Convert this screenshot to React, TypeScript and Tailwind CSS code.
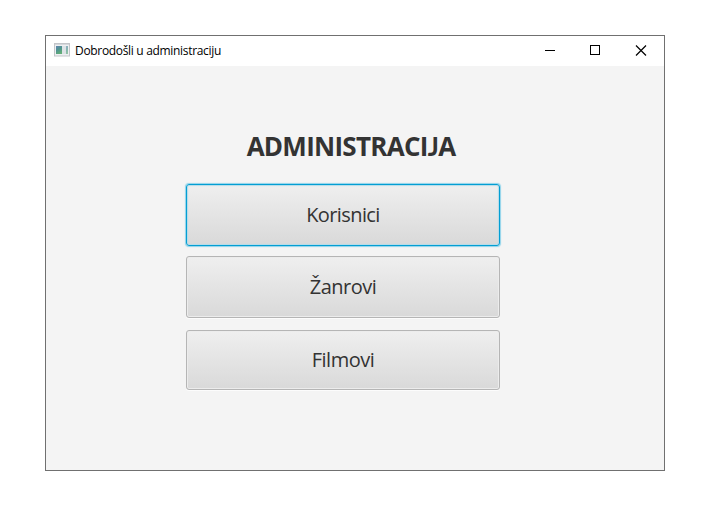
import React from "react";

type MenuButtonProps = {
  label: string;
  className: string;
  textClassName: string;
};

function MenuButton({ label, className, textClassName }: MenuButtonProps) {
  return (
    <button
      type="button"
      className={`flex w-[314px] items-center justify-center rounded-[3px] border bg-linear-to-b from-[#efefef] to-[#d9d9d9] text-[20px] leading-[26px] text-[#333333] ${className}`}
    >
      <span className={textClassName}>{label}</span>
    </button>
  );
}

function AppIcon() {
  return (
    <svg width="16" height="14" viewBox="0 0 16 14" className="mb-0.5 block shrink-0">
      <defs>
        <linearGradient id="pane" x1="0" y1="0" x2="0.5" y2="1">
          <stop offset="0" stopColor="#6284b0" />
          <stop offset="0.5" stopColor="#4f9490" />
          <stop offset="1" stopColor="#62ad78" />
        </linearGradient>
      </defs>
      <rect x="0.5" y="0.5" width="15" height="12.5" fill="#eef0f2" stroke="#c3c5c9" />
      <path d="M1 1.5h14" stroke="#d5d8dc" />
      <rect x="2" y="3" width="6" height="8" fill="url(#pane)" />
      <rect x="8" y="3" width="4" height="8" fill="#dde3e6" />
      <rect x="12" y="3" width="2" height="8" fill="url(#pane)" opacity="0.65" />
    </svg>
  );
}

function TitleBar() {
  return (
    <header className="flex h-[30px] items-center bg-white pl-2">
      <AppIcon />
      <span className="ml-[5px] text-[12px] leading-4 tracking-[-0.32px] whitespace-nowrap text-black">
        Dobrodošli u administraciju
      </span>
      <div className="ml-auto flex h-full items-center pr-[17px]">
        <svg width="102" height="12" viewBox="0 0 102 12" fill="none" stroke="#000" className="block">
          <path d="M0 5.5h10" />
          <rect x="45.5" y="0.5" width="9" height="9" />
          <path d="M91 0.5l10 10M101 0.5l-10 10" strokeWidth="1.2" />
        </svg>
      </div>
    </header>
  );
}

export default function App() {
  return (
    <div className="h-[525px] w-[705px] bg-white px-[45px] pt-[35px] font-['Open_Sans','Noto_Sans',sans-serif]">
      <div className="h-[436px] w-[620px] border border-[#707070] bg-[#f4f4f4]">
        <TitleBar />
        <main className="flex flex-col pt-[62px] pl-[140px]">
          <h1 className="flex h-9 w-[330px] items-center justify-center text-[26px] leading-9 font-bold whitespace-nowrap text-[#333333]">
            <span className="tracking-[-0.72px]">
              ADMINISTRACI<span className="font-['Lato']">J</span>A
            </span>
          </h1>
          <MenuButton
            label="Korisnici"
            className="mt-5 h-[62px] border-[#039ed3] shadow-[0_0_1px_1px_#8fd3ea,inset_0_0_1px_1px_#b4dbe8]"
            textClassName="tracking-[-0.6px]"
          />
          <MenuButton
            label="Žanrovi"
            className="mt-2.5 h-[62px] border-[#b5b5b5] shadow-[0_1px_0_#fcfcfc,inset_0_0_0_1px_#ececec]"
            textClassName="tracking-[-0.5px]"
          />
          <MenuButton
            label="Filmovi"
            className="mt-3 h-[60px] border-[#b5b5b5] shadow-[0_1px_0_#fcfcfc,inset_0_0_0_1px_#ececec]"
            textClassName="tracking-[-0.5px]"
          />
        </main>
      </div>
    </div>
  );
}
